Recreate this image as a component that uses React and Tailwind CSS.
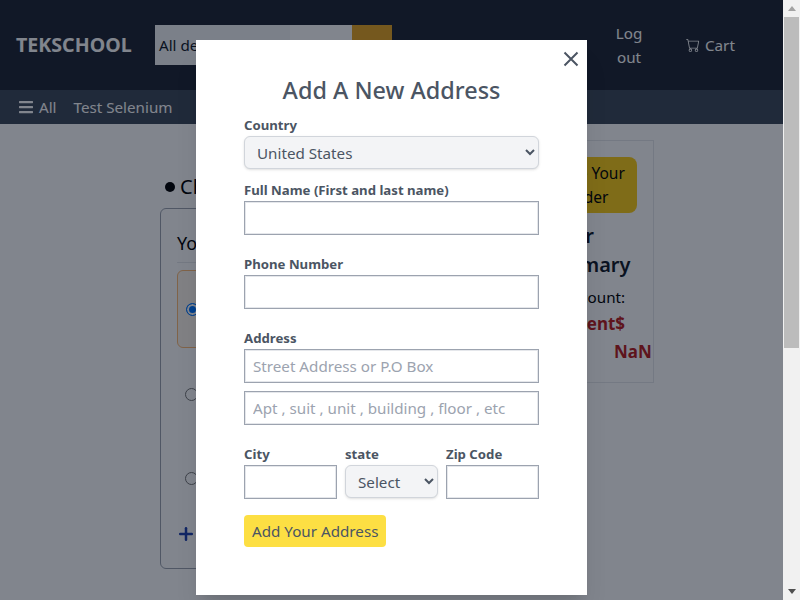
import React from 'react';
import { FaBars } from 'react-icons/fa';
import { BsCart } from 'react-icons/bs';
import { Plus } from 'lucide-react';

const inputCls = 'block w-full h-[34px] border border-[#9ca3af] shadow-[inset_0_0_0_1px_#e5e7eb] bg-white px-[8px] text-[15.2px] text-[#4b5563] placeholder:text-[#9ca3af] outline-none';
const labelCls = 'block mb-px text-[13.2px] leading-[20px] font-bold text-[#4b5563]';
const selectCls = 'block w-full h-[33px] pl-2 rounded-md border border-[#d1d5db] bg-[#f3f4f6] text-[15.2px] text-[#4b5563] shadow-sm';

const Header = () => (
  <>
    <div className="flex h-[90px] items-center bg-[#1f2533] pl-4 text-white">
      <span className="w-[139px] text-[19.6px] font-bold">TEKSCHOOL</span>
      <div className="flex h-10 w-[237px] text-[15.2px] text-[#111827]">
        <div className="flex w-[135px] items-center bg-[#f3f4f6] pl-1">All departments</div>
        <div className="w-[62px] bg-white" />
        <div className="w-10 bg-[#e7a520]" />
      </div>
      <div className="ml-[220px] w-[34px] text-center text-[15.2px] leading-6">Log out</div>
      <div className="ml-[40px] flex items-center gap-[5px] text-[15.2px]">
        <BsCart size={14} />
        Cart
      </div>
    </div>
    <div className="flex h-[34px] items-center gap-[17px] bg-[#3d4959] pl-[18px] text-[15.2px] text-white">
      <span className="flex items-center gap-[5px]">
        <FaBars size={16} />
        All
      </span>
      <span>Test Selenium</span>
    </div>
  </>
);

const Radio = ({ checked }) => (
  <span className={`block h-[13px] w-[13px] rounded-full border ${checked ? 'border-[#0075ff] bg-[#0075ff] ring-2 ring-inset ring-white' : 'border-[#767676] bg-white'}`} />
);

const Checkout = () => (
  <div className="flex h-[476px] bg-white pl-[160px] pt-4 text-black">
    <div className="w-[340px]">
      <div className="flex h-[68px] items-center gap-[5px] pl-[5px] pt-[26px] text-[20px]">
        <span className="h-[10px] w-[10px] rounded-full bg-black" />
        Check
      </div>
      <div className="h-[361px] rounded-md border border-[#9ca3af] px-4 pt-5">
        <div className="border-b border-[#e5e7eb] pb-[5px] text-[18px] leading-7">Your addresses</div>
        <div className="mt-[7px] flex h-[78px] items-center rounded-md border border-[#fdba74] bg-[#fff7ed] pl-2">
          <Radio checked />
        </div>
        <div className="flex h-[84px] items-center pl-2 pt-[9px]"><Radio /></div>
        <div className="flex h-[84px] items-center pl-2 pt-2"><Radio /></div>
        <div className="-ml-px mt-2 flex items-center text-[#1e40af]"><Plus size={20} strokeWidth={3} /></div>
      </div>
    </div>
    <div className="ml-5 h-[243px] w-[134px] border border-[#e5e7eb] px-4 pt-4">
      <div className="flex h-14 items-center justify-center rounded-lg bg-[#facc15] text-center text-[15.5px] leading-6">Place Your<br />Order</div>
      <div className="mt-2 text-[20px] font-semibold leading-[29px] text-[#111827]">Order Summary</div>
      <div className="mt-[5px] pl-[21px] text-[15.2px] leading-[26px]">Discount:</div>
      <div className="pl-[13px] text-[17px] font-bold leading-7 text-[#b91c1c]">Percent$</div>
      <div className="pl-[77px] text-[17px] font-bold leading-7 text-[#b91c1c]">NaN</div>
    </div>
  </div>
);

const AddressModal = () => (
  <div className="relative h-[555px] w-[391px] bg-white px-12 pt-8 shadow-xl">
    <svg className="absolute right-[6px] top-[9px] h-[20px] w-[20px] text-[#4b5563]" viewBox="0 0 20 20" fill="none" stroke="currentColor" strokeWidth="2">
      <path d="M3.5 3.5 16.5 16.5M16.5 3.5 3.5 16.5" />
    </svg>
    <h2 className="text-center text-[23.4px] font-medium leading-[36px] text-[#4b5563]">Add A New Address</h2>
    <label className={`${labelCls} mt-[7px]`}>Country</label>
    <select className={selectCls} defaultValue="us">
      <option value="us">United States</option>
    </select>
    <label className={`${labelCls} mt-[11px]`}>Full Name (First and last name)</label>
    <input className={inputCls} />
    <label className={`${labelCls} mt-[19px]`}>Phone Number</label>
    <input className={inputCls} />
    <label className={`${labelCls} mt-[19px]`}>Address</label>
    <input className={inputCls} placeholder="Street Address or P.O Box" />
    <input className={`${inputCls} mt-2`} placeholder="Apt , suit , unit , building , floor , etc" />
    <div className="mt-[19px] grid grid-cols-3 gap-2">
      <div>
        <label className={labelCls}>City</label>
        <input className={inputCls} />
      </div>
      <div>
        <label className={labelCls}>state</label>
        <select className={selectCls} defaultValue="">
          <option value="">Select</option>
        </select>
      </div>
      <div>
        <label className={labelCls}>Zip Code</label>
        <input className={inputCls} />
      </div>
    </div>
    <button className="mt-4 h-8 rounded bg-[#fddf43] px-2 text-[15.2px] text-[#4b5563]">Add Your Address</button>
  </div>
);

const Scrollbar = () => (
  <div className="flex w-[17px] flex-col items-center bg-[#f1f1f1]">
    <div className="flex h-[17px] w-full items-center justify-center">
      <span className="h-0 w-0 border-x-[4px] border-b-[5px] border-x-transparent border-b-[#a3a3a3]" />
    </div>
    <div className="h-[331px] w-[15px] bg-[#bcbcbc]" />
    <div className="flex-1" />
    <div className="flex h-[17px] w-full items-center justify-center">
      <span className="h-0 w-0 border-x-[4px] border-t-[5px] border-x-transparent border-t-[#505050]" />
    </div>
  </div>
);

export default function App() {
  return (
    <div className="flex h-[600px] w-[800px] overflow-hidden font-['Noto_Sans',sans-serif]">
      <div className="relative flex-1">
        <Header />
        <Checkout />
        {/* backdrop */}
        <div className="absolute inset-0 flex justify-center bg-[rgba(3,11,27,0.5)] pt-10">
          <AddressModal />
        </div>
      </div>
      <Scrollbar />
    </div>
  );
}
